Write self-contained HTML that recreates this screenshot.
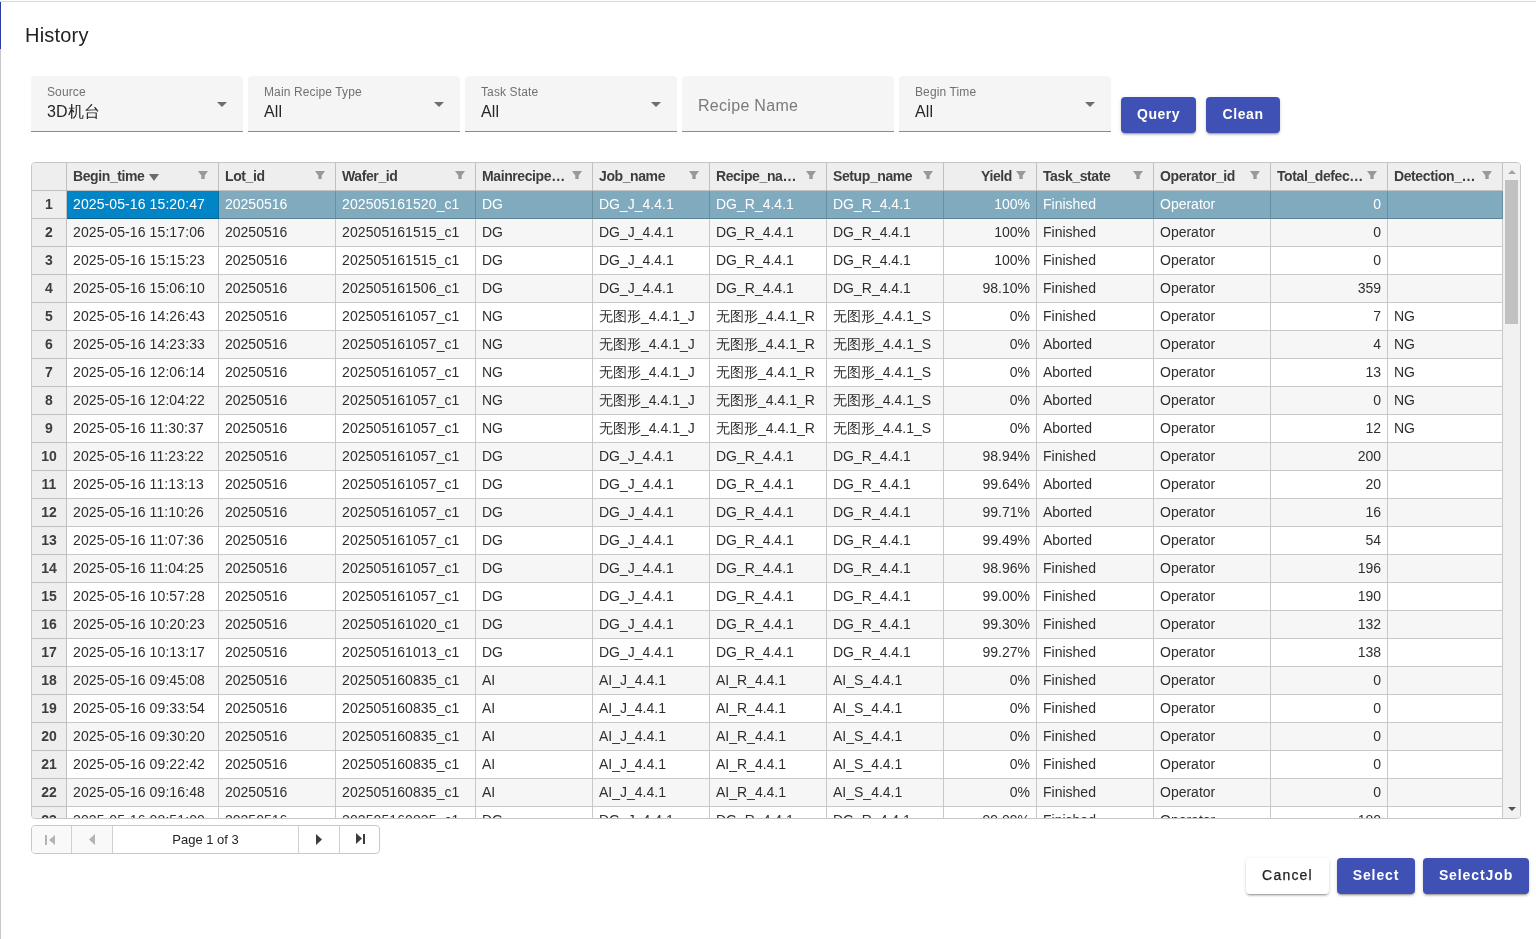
<!DOCTYPE html>
<html><head><meta charset="utf-8"><title>History</title>
<style>
*{box-sizing:border-box}
html,body{margin:0;padding:0;width:1536px;height:939px;overflow:hidden;background:#fff;font-family:"Liberation Sans",sans-serif}
.frame-top{position:absolute;left:0;top:0;width:1536px;height:1px;background:#fcfcfc}
.frame-top2{position:absolute;left:0;top:1px;width:1536px;height:1px;background:#d9dadc}
.frame-left{position:absolute;left:0;top:2px;width:1px;height:937px;background:#c8c8c8}
.frame-blue{position:absolute;left:0;top:2px;width:1px;height:47px;background:#2d3ca0}
.title{position:absolute;left:25px;top:23px;font-size:20px;line-height:24px;color:#212121;letter-spacing:0.2px}
.fld{position:absolute;top:76px;width:212px;height:56px;background:#f5f5f5;border-radius:4px 4px 0 0;border-bottom:1px solid #8a8a8a}
.lbl{position:absolute;left:16px;top:8px;font-size:12px;line-height:16px;color:#717171;letter-spacing:0.12px}
.val{position:absolute;left:16px;top:26px;font-size:16px;line-height:19px;color:#262626;letter-spacing:0.15px}
.ph{position:absolute;left:16px;top:20px;font-size:16px;line-height:19px;color:#7a7a7a;letter-spacing:0.3px}
.arr{position:absolute;right:16px;top:26px;width:0;height:0;border-left:5px solid transparent;border-right:5px solid transparent;border-top:5px solid #6e6e6e}
.btn{position:absolute;height:36px;background:#3f51b5;color:#fff;border-radius:4px;font-size:14px;font-weight:bold;line-height:35px;text-align:center;letter-spacing:0.9px;
 box-shadow:0 3px 1px -2px rgba(0,0,0,.2),0 2px 2px 0 rgba(0,0,0,.14),0 1px 5px 0 rgba(0,0,0,.12)}
.btn.w{background:#fff;color:#222;font-weight:normal;letter-spacing:1.2px;-webkit-text-stroke:0.25px #222}
.grid{will-change:transform;position:absolute;left:31px;top:162px;width:1490px;height:657px;border:1px solid #c6c6c6;border-radius:4px;overflow:hidden;background:#fff;color:#2e2e2e;font-size:14px}
.c{position:absolute;height:28px;line-height:27px;padding:0 6px;border-right:1px solid #c8c8c8;border-bottom:1px solid #c8c8c8;white-space:nowrap;overflow:hidden;background:#fff}
.c.r{text-align:right}
.c.alt{background:#f6f6f6}
.c.h{background:#eeeeee;color:#3d3d3d;font-weight:bold;font-size:14px;letter-spacing:-0.4px;border-color:#c0c0c0}
.c.h.r{padding-right:24px}
.c.rh{background:#eeeeee;color:#3d3d3d;font-weight:bold;text-align:center;padding:0;border-color:#c0c0c0}
.c.sel{background:#80abbf;color:#fff;border-right-color:#6a8d9d;border-bottom-color:#5e8394}
.c.act{background:#0085c7;color:#fff;border-right-color:#0a6ea0;border-bottom-color:#0a5f8a}
.fn{position:absolute;right:10px;top:8px}
.sort{display:inline-block;vertical-align:top;margin-top:11px;margin-left:5px;width:0;height:0;border-left:5.5px solid transparent;border-right:5.5px solid transparent;border-top:7px solid #6a6a6a}
.sb{position:absolute;left:1471px;top:0;width:17px;height:655px;background:#f1f1f1}
.thumb{position:absolute;left:2px;top:17px;width:13px;height:144px;background:#c1c1c1}
.up{position:absolute;left:4.5px;top:7px;width:0;height:0;border-left:4px solid transparent;border-right:4px solid transparent;border-bottom:4px solid #a3a3a3}
.dn{position:absolute;left:4.5px;top:644px;width:0;height:0;border-left:4px solid transparent;border-right:4px solid transparent;border-top:4px solid #505050}
.pager{position:absolute;left:31px;top:825px;width:349px;height:29px;border:1px solid #c8c8c8;border-radius:4px;overflow:hidden;background:#fff;font-size:13px;color:#222}
.pb{position:absolute;top:0;height:27px;border-right:1px solid #d0d0d0}
.pb.dis{background:#f9f9f9}
.ptxt{position:absolute;left:81px;top:0;width:186px;height:27px;line-height:27px;text-align:center;border-right:1px solid #d0d0d0}
</style></head>
<body>
<div id="root" style="position:absolute;left:0;top:0;width:1536px;height:939px;opacity:0.999">
<div class="frame-top"></div><div class="frame-top2"></div><div class="frame-left"></div><div class="frame-blue"></div>
<div class="title">History</div>

<div class="fld" style="left:31px"><div class="lbl">Source</div><div class="val">3D机台</div><div class="arr"></div></div>
<div class="fld" style="left:248px"><div class="lbl">Main Recipe Type</div><div class="val">All</div><div class="arr"></div></div>
<div class="fld" style="left:465px"><div class="lbl">Task State</div><div class="val">All</div><div class="arr"></div></div>
<div class="fld" style="left:682px"><div class="ph">Recipe Name</div></div>
<div class="fld" style="left:899px"><div class="lbl">Begin Time</div><div class="val">All</div><div class="arr"></div></div>

<div class="btn" style="left:1121px;top:97px;width:75px;letter-spacing:0.5px">Query</div>
<div class="btn" style="left:1206px;top:97px;width:74px;letter-spacing:0.6px">Clean</div>

<div class="grid">
<div class="c h" style="left:0;top:0;width:35px;height:28px"></div>
<div class="c h" style="left:35px;top:0;width:152px;height:28px"><span class="ht">Begin_time</span><span class="sort"></span><svg class="fn" width="10" height="9" viewBox="0 0 10 9"><path d="M0 0H10L6.7 4.4V8H3.3V4.4Z" fill="#999"/></svg></div>
<div class="c h" style="left:187px;top:0;width:117px;height:28px"><span class="ht">Lot_id</span><svg class="fn" width="10" height="9" viewBox="0 0 10 9"><path d="M0 0H10L6.7 4.4V8H3.3V4.4Z" fill="#999"/></svg></div>
<div class="c h" style="left:304px;top:0;width:140px;height:28px"><span class="ht">Wafer_id</span><svg class="fn" width="10" height="9" viewBox="0 0 10 9"><path d="M0 0H10L6.7 4.4V8H3.3V4.4Z" fill="#999"/></svg></div>
<div class="c h" style="left:444px;top:0;width:117px;height:28px"><span class="ht">Mainrecipe…</span><svg class="fn" width="10" height="9" viewBox="0 0 10 9"><path d="M0 0H10L6.7 4.4V8H3.3V4.4Z" fill="#999"/></svg></div>
<div class="c h" style="left:561px;top:0;width:117px;height:28px"><span class="ht">Job_name</span><svg class="fn" width="10" height="9" viewBox="0 0 10 9"><path d="M0 0H10L6.7 4.4V8H3.3V4.4Z" fill="#999"/></svg></div>
<div class="c h" style="left:678px;top:0;width:117px;height:28px"><span class="ht">Recipe_na…</span><svg class="fn" width="10" height="9" viewBox="0 0 10 9"><path d="M0 0H10L6.7 4.4V8H3.3V4.4Z" fill="#999"/></svg></div>
<div class="c h" style="left:795px;top:0;width:117px;height:28px"><span class="ht">Setup_name</span><svg class="fn" width="10" height="9" viewBox="0 0 10 9"><path d="M0 0H10L6.7 4.4V8H3.3V4.4Z" fill="#999"/></svg></div>
<div class="c h r" style="left:912px;top:0;width:93px;height:28px"><span class="ht">Yield</span><svg class="fn" width="10" height="9" viewBox="0 0 10 9"><path d="M0 0H10L6.7 4.4V8H3.3V4.4Z" fill="#999"/></svg></div>
<div class="c h" style="left:1005px;top:0;width:117px;height:28px"><span class="ht">Task_state</span><svg class="fn" width="10" height="9" viewBox="0 0 10 9"><path d="M0 0H10L6.7 4.4V8H3.3V4.4Z" fill="#999"/></svg></div>
<div class="c h" style="left:1122px;top:0;width:117px;height:28px"><span class="ht">Operator_id</span><svg class="fn" width="10" height="9" viewBox="0 0 10 9"><path d="M0 0H10L6.7 4.4V8H3.3V4.4Z" fill="#999"/></svg></div>
<div class="c h" style="left:1239px;top:0;width:117px;height:28px"><span class="ht">Total_defec…</span><svg class="fn" width="10" height="9" viewBox="0 0 10 9"><path d="M0 0H10L6.7 4.4V8H3.3V4.4Z" fill="#999"/></svg></div>
<div class="c h" style="left:1356px;top:0;width:115px;height:28px"><span class="ht">Detection_…</span><svg class="fn" width="10" height="9" viewBox="0 0 10 9"><path d="M0 0H10L6.7 4.4V8H3.3V4.4Z" fill="#999"/></svg></div>
<div class="c rh" style="left:0;top:28px;width:35px">1</div>
<div class="c act" style="left:35px;top:28px;width:152px;letter-spacing:0.1px">2025-05-16 15:20:47</div>
<div class="c sel" style="left:187px;top:28px;width:117px">20250516</div>
<div class="c sel" style="left:304px;top:28px;width:140px;letter-spacing:0.1px">202505161520_c1</div>
<div class="c sel" style="left:444px;top:28px;width:117px">DG</div>
<div class="c sel" style="left:561px;top:28px;width:117px">DG_J_4.4.1</div>
<div class="c sel" style="left:678px;top:28px;width:117px">DG_R_4.4.1</div>
<div class="c sel" style="left:795px;top:28px;width:117px">DG_R_4.4.1</div>
<div class="c sel r" style="left:912px;top:28px;width:93px">100%</div>
<div class="c sel" style="left:1005px;top:28px;width:117px">Finished</div>
<div class="c sel" style="left:1122px;top:28px;width:117px">Operator</div>
<div class="c sel r" style="left:1239px;top:28px;width:117px">0</div>
<div class="c sel" style="left:1356px;top:28px;width:115px"></div>
<div class="c rh" style="left:0;top:56px;width:35px">2</div>
<div class="c alt" style="left:35px;top:56px;width:152px;letter-spacing:0.1px">2025-05-16 15:17:06</div>
<div class="c alt" style="left:187px;top:56px;width:117px">20250516</div>
<div class="c alt" style="left:304px;top:56px;width:140px;letter-spacing:0.1px">202505161515_c1</div>
<div class="c alt" style="left:444px;top:56px;width:117px">DG</div>
<div class="c alt" style="left:561px;top:56px;width:117px">DG_J_4.4.1</div>
<div class="c alt" style="left:678px;top:56px;width:117px">DG_R_4.4.1</div>
<div class="c alt" style="left:795px;top:56px;width:117px">DG_R_4.4.1</div>
<div class="c alt r" style="left:912px;top:56px;width:93px">100%</div>
<div class="c alt" style="left:1005px;top:56px;width:117px">Finished</div>
<div class="c alt" style="left:1122px;top:56px;width:117px">Operator</div>
<div class="c alt r" style="left:1239px;top:56px;width:117px">0</div>
<div class="c alt" style="left:1356px;top:56px;width:115px"></div>
<div class="c rh" style="left:0;top:84px;width:35px">3</div>
<div class="c" style="left:35px;top:84px;width:152px;letter-spacing:0.1px">2025-05-16 15:15:23</div>
<div class="c" style="left:187px;top:84px;width:117px">20250516</div>
<div class="c" style="left:304px;top:84px;width:140px;letter-spacing:0.1px">202505161515_c1</div>
<div class="c" style="left:444px;top:84px;width:117px">DG</div>
<div class="c" style="left:561px;top:84px;width:117px">DG_J_4.4.1</div>
<div class="c" style="left:678px;top:84px;width:117px">DG_R_4.4.1</div>
<div class="c" style="left:795px;top:84px;width:117px">DG_R_4.4.1</div>
<div class="c r" style="left:912px;top:84px;width:93px">100%</div>
<div class="c" style="left:1005px;top:84px;width:117px">Finished</div>
<div class="c" style="left:1122px;top:84px;width:117px">Operator</div>
<div class="c r" style="left:1239px;top:84px;width:117px">0</div>
<div class="c" style="left:1356px;top:84px;width:115px"></div>
<div class="c rh" style="left:0;top:112px;width:35px">4</div>
<div class="c alt" style="left:35px;top:112px;width:152px;letter-spacing:0.1px">2025-05-16 15:06:10</div>
<div class="c alt" style="left:187px;top:112px;width:117px">20250516</div>
<div class="c alt" style="left:304px;top:112px;width:140px;letter-spacing:0.1px">202505161506_c1</div>
<div class="c alt" style="left:444px;top:112px;width:117px">DG</div>
<div class="c alt" style="left:561px;top:112px;width:117px">DG_J_4.4.1</div>
<div class="c alt" style="left:678px;top:112px;width:117px">DG_R_4.4.1</div>
<div class="c alt" style="left:795px;top:112px;width:117px">DG_R_4.4.1</div>
<div class="c alt r" style="left:912px;top:112px;width:93px">98.10%</div>
<div class="c alt" style="left:1005px;top:112px;width:117px">Finished</div>
<div class="c alt" style="left:1122px;top:112px;width:117px">Operator</div>
<div class="c alt r" style="left:1239px;top:112px;width:117px">359</div>
<div class="c alt" style="left:1356px;top:112px;width:115px"></div>
<div class="c rh" style="left:0;top:140px;width:35px">5</div>
<div class="c" style="left:35px;top:140px;width:152px;letter-spacing:0.1px">2025-05-16 14:26:43</div>
<div class="c" style="left:187px;top:140px;width:117px">20250516</div>
<div class="c" style="left:304px;top:140px;width:140px;letter-spacing:0.1px">202505161057_c1</div>
<div class="c" style="left:444px;top:140px;width:117px">NG</div>
<div class="c" style="left:561px;top:140px;width:117px">无图形_4.4.1_J</div>
<div class="c" style="left:678px;top:140px;width:117px">无图形_4.4.1_R</div>
<div class="c" style="left:795px;top:140px;width:117px">无图形_4.4.1_S</div>
<div class="c r" style="left:912px;top:140px;width:93px">0%</div>
<div class="c" style="left:1005px;top:140px;width:117px">Finished</div>
<div class="c" style="left:1122px;top:140px;width:117px">Operator</div>
<div class="c r" style="left:1239px;top:140px;width:117px">7</div>
<div class="c" style="left:1356px;top:140px;width:115px">NG</div>
<div class="c rh" style="left:0;top:168px;width:35px">6</div>
<div class="c alt" style="left:35px;top:168px;width:152px;letter-spacing:0.1px">2025-05-16 14:23:33</div>
<div class="c alt" style="left:187px;top:168px;width:117px">20250516</div>
<div class="c alt" style="left:304px;top:168px;width:140px;letter-spacing:0.1px">202505161057_c1</div>
<div class="c alt" style="left:444px;top:168px;width:117px">NG</div>
<div class="c alt" style="left:561px;top:168px;width:117px">无图形_4.4.1_J</div>
<div class="c alt" style="left:678px;top:168px;width:117px">无图形_4.4.1_R</div>
<div class="c alt" style="left:795px;top:168px;width:117px">无图形_4.4.1_S</div>
<div class="c alt r" style="left:912px;top:168px;width:93px">0%</div>
<div class="c alt" style="left:1005px;top:168px;width:117px">Aborted</div>
<div class="c alt" style="left:1122px;top:168px;width:117px">Operator</div>
<div class="c alt r" style="left:1239px;top:168px;width:117px">4</div>
<div class="c alt" style="left:1356px;top:168px;width:115px">NG</div>
<div class="c rh" style="left:0;top:196px;width:35px">7</div>
<div class="c" style="left:35px;top:196px;width:152px;letter-spacing:0.1px">2025-05-16 12:06:14</div>
<div class="c" style="left:187px;top:196px;width:117px">20250516</div>
<div class="c" style="left:304px;top:196px;width:140px;letter-spacing:0.1px">202505161057_c1</div>
<div class="c" style="left:444px;top:196px;width:117px">NG</div>
<div class="c" style="left:561px;top:196px;width:117px">无图形_4.4.1_J</div>
<div class="c" style="left:678px;top:196px;width:117px">无图形_4.4.1_R</div>
<div class="c" style="left:795px;top:196px;width:117px">无图形_4.4.1_S</div>
<div class="c r" style="left:912px;top:196px;width:93px">0%</div>
<div class="c" style="left:1005px;top:196px;width:117px">Aborted</div>
<div class="c" style="left:1122px;top:196px;width:117px">Operator</div>
<div class="c r" style="left:1239px;top:196px;width:117px">13</div>
<div class="c" style="left:1356px;top:196px;width:115px">NG</div>
<div class="c rh" style="left:0;top:224px;width:35px">8</div>
<div class="c alt" style="left:35px;top:224px;width:152px;letter-spacing:0.1px">2025-05-16 12:04:22</div>
<div class="c alt" style="left:187px;top:224px;width:117px">20250516</div>
<div class="c alt" style="left:304px;top:224px;width:140px;letter-spacing:0.1px">202505161057_c1</div>
<div class="c alt" style="left:444px;top:224px;width:117px">NG</div>
<div class="c alt" style="left:561px;top:224px;width:117px">无图形_4.4.1_J</div>
<div class="c alt" style="left:678px;top:224px;width:117px">无图形_4.4.1_R</div>
<div class="c alt" style="left:795px;top:224px;width:117px">无图形_4.4.1_S</div>
<div class="c alt r" style="left:912px;top:224px;width:93px">0%</div>
<div class="c alt" style="left:1005px;top:224px;width:117px">Aborted</div>
<div class="c alt" style="left:1122px;top:224px;width:117px">Operator</div>
<div class="c alt r" style="left:1239px;top:224px;width:117px">0</div>
<div class="c alt" style="left:1356px;top:224px;width:115px">NG</div>
<div class="c rh" style="left:0;top:252px;width:35px">9</div>
<div class="c" style="left:35px;top:252px;width:152px;letter-spacing:0.1px">2025-05-16 11:30:37</div>
<div class="c" style="left:187px;top:252px;width:117px">20250516</div>
<div class="c" style="left:304px;top:252px;width:140px;letter-spacing:0.1px">202505161057_c1</div>
<div class="c" style="left:444px;top:252px;width:117px">NG</div>
<div class="c" style="left:561px;top:252px;width:117px">无图形_4.4.1_J</div>
<div class="c" style="left:678px;top:252px;width:117px">无图形_4.4.1_R</div>
<div class="c" style="left:795px;top:252px;width:117px">无图形_4.4.1_S</div>
<div class="c r" style="left:912px;top:252px;width:93px">0%</div>
<div class="c" style="left:1005px;top:252px;width:117px">Aborted</div>
<div class="c" style="left:1122px;top:252px;width:117px">Operator</div>
<div class="c r" style="left:1239px;top:252px;width:117px">12</div>
<div class="c" style="left:1356px;top:252px;width:115px">NG</div>
<div class="c rh" style="left:0;top:280px;width:35px">10</div>
<div class="c alt" style="left:35px;top:280px;width:152px;letter-spacing:0.1px">2025-05-16 11:23:22</div>
<div class="c alt" style="left:187px;top:280px;width:117px">20250516</div>
<div class="c alt" style="left:304px;top:280px;width:140px;letter-spacing:0.1px">202505161057_c1</div>
<div class="c alt" style="left:444px;top:280px;width:117px">DG</div>
<div class="c alt" style="left:561px;top:280px;width:117px">DG_J_4.4.1</div>
<div class="c alt" style="left:678px;top:280px;width:117px">DG_R_4.4.1</div>
<div class="c alt" style="left:795px;top:280px;width:117px">DG_R_4.4.1</div>
<div class="c alt r" style="left:912px;top:280px;width:93px">98.94%</div>
<div class="c alt" style="left:1005px;top:280px;width:117px">Finished</div>
<div class="c alt" style="left:1122px;top:280px;width:117px">Operator</div>
<div class="c alt r" style="left:1239px;top:280px;width:117px">200</div>
<div class="c alt" style="left:1356px;top:280px;width:115px"></div>
<div class="c rh" style="left:0;top:308px;width:35px">11</div>
<div class="c" style="left:35px;top:308px;width:152px;letter-spacing:0.1px">2025-05-16 11:13:13</div>
<div class="c" style="left:187px;top:308px;width:117px">20250516</div>
<div class="c" style="left:304px;top:308px;width:140px;letter-spacing:0.1px">202505161057_c1</div>
<div class="c" style="left:444px;top:308px;width:117px">DG</div>
<div class="c" style="left:561px;top:308px;width:117px">DG_J_4.4.1</div>
<div class="c" style="left:678px;top:308px;width:117px">DG_R_4.4.1</div>
<div class="c" style="left:795px;top:308px;width:117px">DG_R_4.4.1</div>
<div class="c r" style="left:912px;top:308px;width:93px">99.64%</div>
<div class="c" style="left:1005px;top:308px;width:117px">Aborted</div>
<div class="c" style="left:1122px;top:308px;width:117px">Operator</div>
<div class="c r" style="left:1239px;top:308px;width:117px">20</div>
<div class="c" style="left:1356px;top:308px;width:115px"></div>
<div class="c rh" style="left:0;top:336px;width:35px">12</div>
<div class="c alt" style="left:35px;top:336px;width:152px;letter-spacing:0.1px">2025-05-16 11:10:26</div>
<div class="c alt" style="left:187px;top:336px;width:117px">20250516</div>
<div class="c alt" style="left:304px;top:336px;width:140px;letter-spacing:0.1px">202505161057_c1</div>
<div class="c alt" style="left:444px;top:336px;width:117px">DG</div>
<div class="c alt" style="left:561px;top:336px;width:117px">DG_J_4.4.1</div>
<div class="c alt" style="left:678px;top:336px;width:117px">DG_R_4.4.1</div>
<div class="c alt" style="left:795px;top:336px;width:117px">DG_R_4.4.1</div>
<div class="c alt r" style="left:912px;top:336px;width:93px">99.71%</div>
<div class="c alt" style="left:1005px;top:336px;width:117px">Aborted</div>
<div class="c alt" style="left:1122px;top:336px;width:117px">Operator</div>
<div class="c alt r" style="left:1239px;top:336px;width:117px">16</div>
<div class="c alt" style="left:1356px;top:336px;width:115px"></div>
<div class="c rh" style="left:0;top:364px;width:35px">13</div>
<div class="c" style="left:35px;top:364px;width:152px;letter-spacing:0.1px">2025-05-16 11:07:36</div>
<div class="c" style="left:187px;top:364px;width:117px">20250516</div>
<div class="c" style="left:304px;top:364px;width:140px;letter-spacing:0.1px">202505161057_c1</div>
<div class="c" style="left:444px;top:364px;width:117px">DG</div>
<div class="c" style="left:561px;top:364px;width:117px">DG_J_4.4.1</div>
<div class="c" style="left:678px;top:364px;width:117px">DG_R_4.4.1</div>
<div class="c" style="left:795px;top:364px;width:117px">DG_R_4.4.1</div>
<div class="c r" style="left:912px;top:364px;width:93px">99.49%</div>
<div class="c" style="left:1005px;top:364px;width:117px">Aborted</div>
<div class="c" style="left:1122px;top:364px;width:117px">Operator</div>
<div class="c r" style="left:1239px;top:364px;width:117px">54</div>
<div class="c" style="left:1356px;top:364px;width:115px"></div>
<div class="c rh" style="left:0;top:392px;width:35px">14</div>
<div class="c alt" style="left:35px;top:392px;width:152px;letter-spacing:0.1px">2025-05-16 11:04:25</div>
<div class="c alt" style="left:187px;top:392px;width:117px">20250516</div>
<div class="c alt" style="left:304px;top:392px;width:140px;letter-spacing:0.1px">202505161057_c1</div>
<div class="c alt" style="left:444px;top:392px;width:117px">DG</div>
<div class="c alt" style="left:561px;top:392px;width:117px">DG_J_4.4.1</div>
<div class="c alt" style="left:678px;top:392px;width:117px">DG_R_4.4.1</div>
<div class="c alt" style="left:795px;top:392px;width:117px">DG_R_4.4.1</div>
<div class="c alt r" style="left:912px;top:392px;width:93px">98.96%</div>
<div class="c alt" style="left:1005px;top:392px;width:117px">Finished</div>
<div class="c alt" style="left:1122px;top:392px;width:117px">Operator</div>
<div class="c alt r" style="left:1239px;top:392px;width:117px">196</div>
<div class="c alt" style="left:1356px;top:392px;width:115px"></div>
<div class="c rh" style="left:0;top:420px;width:35px">15</div>
<div class="c" style="left:35px;top:420px;width:152px;letter-spacing:0.1px">2025-05-16 10:57:28</div>
<div class="c" style="left:187px;top:420px;width:117px">20250516</div>
<div class="c" style="left:304px;top:420px;width:140px;letter-spacing:0.1px">202505161057_c1</div>
<div class="c" style="left:444px;top:420px;width:117px">DG</div>
<div class="c" style="left:561px;top:420px;width:117px">DG_J_4.4.1</div>
<div class="c" style="left:678px;top:420px;width:117px">DG_R_4.4.1</div>
<div class="c" style="left:795px;top:420px;width:117px">DG_R_4.4.1</div>
<div class="c r" style="left:912px;top:420px;width:93px">99.00%</div>
<div class="c" style="left:1005px;top:420px;width:117px">Finished</div>
<div class="c" style="left:1122px;top:420px;width:117px">Operator</div>
<div class="c r" style="left:1239px;top:420px;width:117px">190</div>
<div class="c" style="left:1356px;top:420px;width:115px"></div>
<div class="c rh" style="left:0;top:448px;width:35px">16</div>
<div class="c alt" style="left:35px;top:448px;width:152px;letter-spacing:0.1px">2025-05-16 10:20:23</div>
<div class="c alt" style="left:187px;top:448px;width:117px">20250516</div>
<div class="c alt" style="left:304px;top:448px;width:140px;letter-spacing:0.1px">202505161020_c1</div>
<div class="c alt" style="left:444px;top:448px;width:117px">DG</div>
<div class="c alt" style="left:561px;top:448px;width:117px">DG_J_4.4.1</div>
<div class="c alt" style="left:678px;top:448px;width:117px">DG_R_4.4.1</div>
<div class="c alt" style="left:795px;top:448px;width:117px">DG_R_4.4.1</div>
<div class="c alt r" style="left:912px;top:448px;width:93px">99.30%</div>
<div class="c alt" style="left:1005px;top:448px;width:117px">Finished</div>
<div class="c alt" style="left:1122px;top:448px;width:117px">Operator</div>
<div class="c alt r" style="left:1239px;top:448px;width:117px">132</div>
<div class="c alt" style="left:1356px;top:448px;width:115px"></div>
<div class="c rh" style="left:0;top:476px;width:35px">17</div>
<div class="c" style="left:35px;top:476px;width:152px;letter-spacing:0.1px">2025-05-16 10:13:17</div>
<div class="c" style="left:187px;top:476px;width:117px">20250516</div>
<div class="c" style="left:304px;top:476px;width:140px;letter-spacing:0.1px">202505161013_c1</div>
<div class="c" style="left:444px;top:476px;width:117px">DG</div>
<div class="c" style="left:561px;top:476px;width:117px">DG_J_4.4.1</div>
<div class="c" style="left:678px;top:476px;width:117px">DG_R_4.4.1</div>
<div class="c" style="left:795px;top:476px;width:117px">DG_R_4.4.1</div>
<div class="c r" style="left:912px;top:476px;width:93px">99.27%</div>
<div class="c" style="left:1005px;top:476px;width:117px">Finished</div>
<div class="c" style="left:1122px;top:476px;width:117px">Operator</div>
<div class="c r" style="left:1239px;top:476px;width:117px">138</div>
<div class="c" style="left:1356px;top:476px;width:115px"></div>
<div class="c rh" style="left:0;top:504px;width:35px">18</div>
<div class="c alt" style="left:35px;top:504px;width:152px;letter-spacing:0.1px">2025-05-16 09:45:08</div>
<div class="c alt" style="left:187px;top:504px;width:117px">20250516</div>
<div class="c alt" style="left:304px;top:504px;width:140px;letter-spacing:0.1px">202505160835_c1</div>
<div class="c alt" style="left:444px;top:504px;width:117px">AI</div>
<div class="c alt" style="left:561px;top:504px;width:117px">AI_J_4.4.1</div>
<div class="c alt" style="left:678px;top:504px;width:117px">AI_R_4.4.1</div>
<div class="c alt" style="left:795px;top:504px;width:117px">AI_S_4.4.1</div>
<div class="c alt r" style="left:912px;top:504px;width:93px">0%</div>
<div class="c alt" style="left:1005px;top:504px;width:117px">Finished</div>
<div class="c alt" style="left:1122px;top:504px;width:117px">Operator</div>
<div class="c alt r" style="left:1239px;top:504px;width:117px">0</div>
<div class="c alt" style="left:1356px;top:504px;width:115px"></div>
<div class="c rh" style="left:0;top:532px;width:35px">19</div>
<div class="c" style="left:35px;top:532px;width:152px;letter-spacing:0.1px">2025-05-16 09:33:54</div>
<div class="c" style="left:187px;top:532px;width:117px">20250516</div>
<div class="c" style="left:304px;top:532px;width:140px;letter-spacing:0.1px">202505160835_c1</div>
<div class="c" style="left:444px;top:532px;width:117px">AI</div>
<div class="c" style="left:561px;top:532px;width:117px">AI_J_4.4.1</div>
<div class="c" style="left:678px;top:532px;width:117px">AI_R_4.4.1</div>
<div class="c" style="left:795px;top:532px;width:117px">AI_S_4.4.1</div>
<div class="c r" style="left:912px;top:532px;width:93px">0%</div>
<div class="c" style="left:1005px;top:532px;width:117px">Finished</div>
<div class="c" style="left:1122px;top:532px;width:117px">Operator</div>
<div class="c r" style="left:1239px;top:532px;width:117px">0</div>
<div class="c" style="left:1356px;top:532px;width:115px"></div>
<div class="c rh" style="left:0;top:560px;width:35px">20</div>
<div class="c alt" style="left:35px;top:560px;width:152px;letter-spacing:0.1px">2025-05-16 09:30:20</div>
<div class="c alt" style="left:187px;top:560px;width:117px">20250516</div>
<div class="c alt" style="left:304px;top:560px;width:140px;letter-spacing:0.1px">202505160835_c1</div>
<div class="c alt" style="left:444px;top:560px;width:117px">AI</div>
<div class="c alt" style="left:561px;top:560px;width:117px">AI_J_4.4.1</div>
<div class="c alt" style="left:678px;top:560px;width:117px">AI_R_4.4.1</div>
<div class="c alt" style="left:795px;top:560px;width:117px">AI_S_4.4.1</div>
<div class="c alt r" style="left:912px;top:560px;width:93px">0%</div>
<div class="c alt" style="left:1005px;top:560px;width:117px">Finished</div>
<div class="c alt" style="left:1122px;top:560px;width:117px">Operator</div>
<div class="c alt r" style="left:1239px;top:560px;width:117px">0</div>
<div class="c alt" style="left:1356px;top:560px;width:115px"></div>
<div class="c rh" style="left:0;top:588px;width:35px">21</div>
<div class="c" style="left:35px;top:588px;width:152px;letter-spacing:0.1px">2025-05-16 09:22:42</div>
<div class="c" style="left:187px;top:588px;width:117px">20250516</div>
<div class="c" style="left:304px;top:588px;width:140px;letter-spacing:0.1px">202505160835_c1</div>
<div class="c" style="left:444px;top:588px;width:117px">AI</div>
<div class="c" style="left:561px;top:588px;width:117px">AI_J_4.4.1</div>
<div class="c" style="left:678px;top:588px;width:117px">AI_R_4.4.1</div>
<div class="c" style="left:795px;top:588px;width:117px">AI_S_4.4.1</div>
<div class="c r" style="left:912px;top:588px;width:93px">0%</div>
<div class="c" style="left:1005px;top:588px;width:117px">Finished</div>
<div class="c" style="left:1122px;top:588px;width:117px">Operator</div>
<div class="c r" style="left:1239px;top:588px;width:117px">0</div>
<div class="c" style="left:1356px;top:588px;width:115px"></div>
<div class="c rh" style="left:0;top:616px;width:35px">22</div>
<div class="c alt" style="left:35px;top:616px;width:152px;letter-spacing:0.1px">2025-05-16 09:16:48</div>
<div class="c alt" style="left:187px;top:616px;width:117px">20250516</div>
<div class="c alt" style="left:304px;top:616px;width:140px;letter-spacing:0.1px">202505160835_c1</div>
<div class="c alt" style="left:444px;top:616px;width:117px">AI</div>
<div class="c alt" style="left:561px;top:616px;width:117px">AI_J_4.4.1</div>
<div class="c alt" style="left:678px;top:616px;width:117px">AI_R_4.4.1</div>
<div class="c alt" style="left:795px;top:616px;width:117px">AI_S_4.4.1</div>
<div class="c alt r" style="left:912px;top:616px;width:93px">0%</div>
<div class="c alt" style="left:1005px;top:616px;width:117px">Finished</div>
<div class="c alt" style="left:1122px;top:616px;width:117px">Operator</div>
<div class="c alt r" style="left:1239px;top:616px;width:117px">0</div>
<div class="c alt" style="left:1356px;top:616px;width:115px"></div>
<div class="c rh" style="left:0;top:644px;width:35px">23</div>
<div class="c" style="left:35px;top:644px;width:152px;letter-spacing:0.1px">2025-05-16 08:51:00</div>
<div class="c" style="left:187px;top:644px;width:117px">20250516</div>
<div class="c" style="left:304px;top:644px;width:140px;letter-spacing:0.1px">202505160835_c1</div>
<div class="c" style="left:444px;top:644px;width:117px">DG</div>
<div class="c" style="left:561px;top:644px;width:117px">DG_J_4.4.1</div>
<div class="c" style="left:678px;top:644px;width:117px">DG_R_4.4.1</div>
<div class="c" style="left:795px;top:644px;width:117px">DG_R_4.4.1</div>
<div class="c r" style="left:912px;top:644px;width:93px">99.09%</div>
<div class="c" style="left:1005px;top:644px;width:117px">Finished</div>
<div class="c" style="left:1122px;top:644px;width:117px">Operator</div>
<div class="c r" style="left:1239px;top:644px;width:117px">180</div>
<div class="c" style="left:1356px;top:644px;width:115px"></div>
<div class="sb"><div class="up"></div><div class="thumb"></div><div class="dn"></div></div>
</div>

<div class="pager">
 <div class="pb dis" style="left:0;width:40px"></div>
 <div class="pb dis" style="left:40px;width:41px"></div>
 <div class="ptxt">Page 1 of 3</div>
 <div class="pb" style="left:267px;width:41px"></div>
 <svg style="position:absolute;left:0;top:0" width="347" height="27" viewBox="0 0 347 27">
  <rect x="13" y="9" width="2" height="10" fill="#b3b3b3"/><path d="M23 9V19L17 14Z" fill="#b3b3b3"/>
  <path d="M63 8V19L57 13.5Z" fill="#b3b3b3"/>
  <path d="M284 8V19L290 13.5Z" fill="#3c3c3c"/>
  <path d="M324 7V18L330 12.5Z" fill="#3c3c3c"/><rect x="331" y="8" width="2" height="10" fill="#3c3c3c"/>
 </svg>
</div>

<div class="btn w" style="left:1246px;top:858px;width:83px">Cancel</div>
<div class="btn" style="left:1337px;top:858px;width:78px">Select</div>
<div class="btn" style="left:1423px;top:858px;width:106px">SelectJob</div>
</div>
</body></html>
